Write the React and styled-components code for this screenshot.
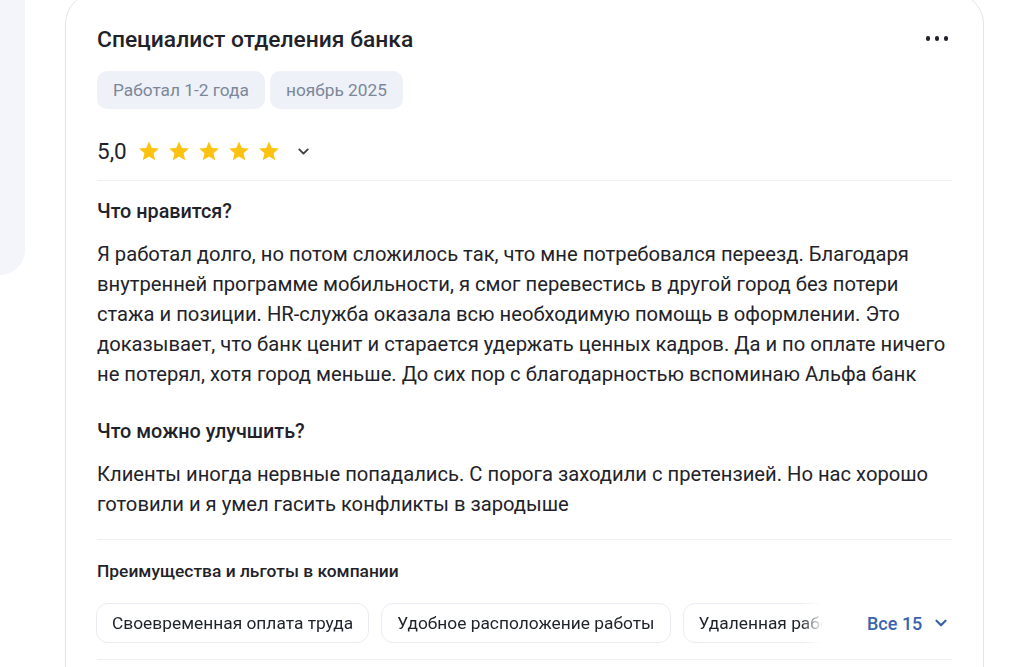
import React from "react";
import styled, { createGlobalStyle } from "styled-components";

const GlobalStyle = createGlobalStyle`
  html, body { margin: 0; padding: 0; background: #ffffff; }
  body { font-family: Roboto, "Noto Sans", Arial, sans-serif; color: #1f2329; overflow: hidden; }
  * { box-sizing: border-box; }
`;

const Page = styled.div`
  display: flex;
  align-items: flex-start;
  gap: 40px;
  width: 1033px;
  height: 667px;
  overflow: hidden;
`;

const SidePanel = styled.div`
  width: 25px;
  height: 275px;
  flex-shrink: 0;
  background: #f4f5fa;
  border-bottom-right-radius: 26px;
`;

const Card = styled.section`
  width: 919px;
  margin-top: -8px;
  border: 1px solid #e2e5ec;
  border-radius: 32px;
  padding: 33px 31px 40px 31px;
  background: #fff;
`;

const HeaderRow = styled.div`
  display: flex;
  align-items: center;
  justify-content: space-between;
`;

const Title = styled.h2`
  margin: 0;
  font-size: 22.8px;
  line-height: 28px;
  font-weight: 500;
  color: #1f2329;
`;

const MoreButton = styled.button`
  display: flex;
  align-items: center;
  gap: 4.5px;
  margin-right: 4px;
  margin-top: -3px;
  padding: 0;
  border: 0;
  background: none;
  height: 28px;
`;

const Dot = styled.span`
  width: 4.5px;
  height: 4.5px;
  border-radius: 50%;
  background: #1f2329;
`;

const TagRow = styled.div`
  display: flex;
  gap: 5px;
  margin-top: 17px;
`;

const Tag = styled.span`
  display: inline-flex;
  align-items: center;
  height: 38px;
  padding: 0 16px;
  border-radius: 10px;
  background: #eef1f7;
  color: #7b879a;
  font-size: 17.3px;
`;

const RatingRow = styled.div`
  display: flex;
  align-items: center;
  height: 28px;
  margin-top: 28px;
  padding-bottom: 15px;
  box-sizing: content-box;
  border-bottom: 1px solid #eceef2;
`;

const Score = styled.span`
  font-size: 22.5px;
  line-height: 28px;
  color: #1f2329;
  margin-right: 11px;
`;

const Stars = styled.div`
  display: flex;
  gap: 8px;
`;

const ChevronWrap = styled.span`
  display: inline-flex;
  margin-left: ${(p) => p.$gap || 0}px;
  color: ${(p) => p.$color || "#3c4049"};
`;

const Section = styled.div`
  padding-top: ${(p) => p.$top}px;
`;

const SectionTitle = styled.h3`
  margin: 0 0 15px;
  font-size: 19.8px;
  line-height: 24px;
  font-weight: 500;
  color: #1f2329;
`;

const Body = styled.p`
  margin: 0;
  font-size: 20.2px;
  line-height: 30px;
  color: #1f2329;
`;

const Benefits = styled.div`
  margin-top: 20px;
  padding-top: 19px;
  padding-bottom: 16px;
  border-top: 1px solid #eceef2;
  border-bottom: 1px solid #eceef2;
`;

const BenefitsTitle = styled.h4`
  margin: 0 0 20px;
  font-size: 17.4px;
  line-height: 24px;
  font-weight: 500;
  color: #1f2329;
`;

const BenefitsRow = styled.div`
  display: flex;
  align-items: center;
`;

const ChipTrack = styled.div`
  display: flex;
  gap: 12px;
  width: 727px;
  overflow: hidden;
  margin-left: -1px;
  -webkit-mask-image: linear-gradient(to right, #000 calc(100% - 22px), transparent);
  mask-image: linear-gradient(to right, #000 calc(100% - 22px), transparent);
`;

const Chip = styled.span`
  display: inline-flex;
  align-items: center;
  flex-shrink: 0;
  height: 40px;
  padding: 0 15px;
  border: 1px solid #e9ecf3;
  border-radius: 12px;
  font-size: 17.35px;
  color: #1f2329;
  white-space: nowrap;
`;

const AllButton = styled.button`
  display: flex;
  align-items: center;
  margin-left: 44px;
  padding: 0;
  border: 0;
  background: none;
  font-family: inherit;
  font-size: 18px;
  font-weight: 500;
  color: #3a63ad;
`;

const Star = () => (
  <svg width="22" height="22" viewBox="0 0 24 24">
    <path
      fill="#fdc10f"
      d="M12 1.6l3.1 7.1 7.7.7-5.8 5.1 1.7 7.6L12 18.1l-6.7 4 1.7-7.6L1.2 9.4l7.7-.7z"
    />
  </svg>
);

const Chevron = ({ size = 16, weight = 2.6 }) => (
  <svg width={size} height={size} viewBox="0 0 24 24" fill="none" stroke="currentColor" strokeWidth={weight} strokeLinecap="round" strokeLinejoin="round">
    <path d="M6 9l6 6 6-6" />
  </svg>
);

export default function App() {
  return (
    <>
      <GlobalStyle />
      <Page>
        <SidePanel />
        <Card>
          <HeaderRow>
            <Title>Специалист отделения банка</Title>
            <MoreButton aria-label="Ещё">
              <Dot />
              <Dot />
              <Dot />
            </MoreButton>
          </HeaderRow>
          <TagRow>
            <Tag>Работал 1-2 года</Tag>
            <Tag>ноябрь 2025</Tag>
          </TagRow>
          <RatingRow>
            <Score>5,0</Score>
            <Stars>
              {[0, 1, 2, 3, 4].map((i) => (
                <Star key={i} />
              ))}
            </Stars>
            <ChevronWrap $gap={15}>
              <Chevron size={17} />
            </ChevronWrap>
          </RatingRow>
          <Section $top={19}>
            <SectionTitle>Что нравится?</SectionTitle>
            <Body>
              Я работал долго, но потом сложилось так, что мне потребовался переезд. Благодаря
              внутренней программе мобильности, я смог перевестись в другой город без потери
              стажа и позиции. HR-служба оказала всю необходимую помощь в оформлении. Это
              доказывает, что банк ценит и старается удержать ценных кадров. Да и по оплате ничего
              не потерял, хотя город меньше. До сих пор с благодарностью вспоминаю Альфа банк
            </Body>
          </Section>
          <Section $top={31}>
            <SectionTitle>Что можно улучшить?</SectionTitle>
            <Body>
              Клиенты иногда нервные попадались. С порога заходили с претензией. Но нас хорошо
              готовили и я умел гасить конфликты в зародыше
            </Body>
          </Section>
          <Benefits>
            <BenefitsTitle>Преимущества и льготы в компании</BenefitsTitle>
            <BenefitsRow>
              <ChipTrack>
                <Chip>Своевременная оплата труда</Chip>
                <Chip>Удобное расположение работы</Chip>
                <Chip>Удаленная работа</Chip>
              </ChipTrack>
              <AllButton>
                Все 15
                <ChevronWrap $gap={10} $color="#3a63ad">
                  <Chevron size={18} weight={3} />
                </ChevronWrap>
              </AllButton>
            </BenefitsRow>
          </Benefits>
        </Card>
      </Page>
    </>
  );
}
